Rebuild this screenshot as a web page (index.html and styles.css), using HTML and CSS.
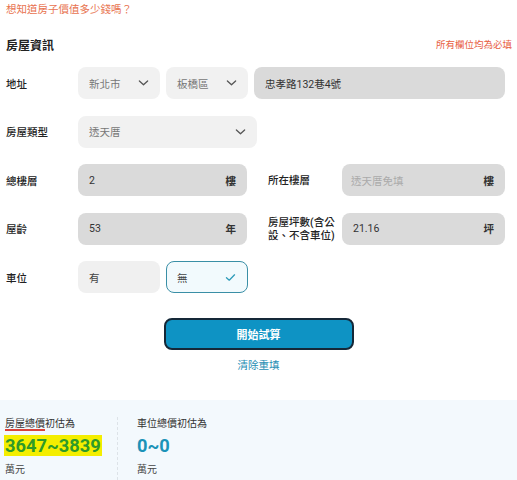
FILE: index.html
```html
<!DOCTYPE html>
<html lang="zh-Hant">
<head>
<meta charset="utf-8">
<title>房屋估價</title>
<link rel="stylesheet" href="styles.css">
</head>
<body>
<div class="page">
  <p class="intro">想知道房子價值多少錢嗎？</p>
  <div class="section-head">
    <h2 class="section-title">房屋資訊</h2>
    <span class="required-note">所有欄位均為必填</span>
  </div>

  <div class="form">
    <div class="row">
      <div class="label">地址</div>
      <div class="controls">
        <div class="select w82"><span>新北市</span><svg class="chev" viewBox="0 0 12 8"><path d="M1.5 1.8 6 6 10.5 1.8"/></svg></div>
        <div class="select w82"><span>板橋區</span><svg class="chev" viewBox="0 0 12 8"><path d="M1.5 1.8 6 6 10.5 1.8"/></svg></div>
        <div class="input grow"><span class="val">忠孝路132巷4號</span></div>
      </div>
    </div>

    <div class="row">
      <div class="label">房屋類型</div>
      <div class="controls">
        <div class="select w179"><span>透天厝</span><svg class="chev" viewBox="0 0 12 8"><path d="M1.5 1.8 6 6 10.5 1.8"/></svg></div>
      </div>
    </div>

    <div class="row">
      <div class="label">總樓層</div>
      <div class="controls">
        <div class="input w169"><span class="val">2</span><span class="unit">樓</span></div>
        <div class="label2">所在樓層</div>
        <div class="input grow"><span class="ph">透天厝免填</span><span class="unit">樓</span></div>
      </div>
    </div>

    <div class="row">
      <div class="label">屋齡</div>
      <div class="controls">
        <div class="input w169"><span class="val">53</span><span class="unit">年</span></div>
        <div class="label2">房屋坪數(含公設、不含車位)</div>
        <div class="input grow"><span class="val">21.16</span><span class="unit">坪</span></div>
      </div>
    </div>

    <div class="row">
      <div class="label">車位</div>
      <div class="controls">
        <div class="option w82"><span>有</span></div>
        <div class="option w82 selected"><span>無</span><svg class="check" viewBox="0 0 12 10"><path d="M1.5 5.2 4.6 8 10.5 2"/></svg></div>
      </div>
    </div>
  </div>

  <div class="actions">
    <button class="submit">開始試算</button>
    <a class="reset">清除重填</a>
  </div>
</div>

<div class="result">
  <div class="result-col first">
    <div class="result-label"><span class="mark">房屋總價</span>初估為</div>
    <div class="result-value green"><span class="hl">3647~3839</span></div>
    <div class="result-unit">萬元</div>
  </div>
  <div class="result-col second">
    <div class="result-label">車位總價初估為</div>
    <div class="result-value blue">0~0</div>
    <div class="result-unit">萬元</div>
  </div>
</div>
</body>
</html>
```

FILE: styles.css
```css
* { box-sizing: border-box; }
html, body { margin: 0; padding: 0; background: #fff; }
body {
  font-family: Roboto, "Noto Sans CJK TC", "Noto Sans", sans-serif;
  color: #222;
  width: 517px;
  height: 480px;
  overflow: hidden;
}
.page { padding: 2px 12px 0 6px; height: 400px; }
.intro {
  margin: 0;
  font-size: 10.5px;
  line-height: 16px;
  color: #e8734f;
}
.section-head {
  display: flex;
  justify-content: space-between;
  align-items: center;
  margin-top: 18px;
  height: 16px;
}
.section-title {
  margin: 0;
  font-size: 12px;
  font-weight: 700;
  color: #222;
}
.required-note {
  font-size: 9.5px;
  color: #e8603f;
  margin-right: -7px;
}
.form {
  margin-top: 15px;
  display: flex;
  flex-direction: column;
  gap: 16.5px;
}
.row {
  display: flex;
  align-items: center;
  min-height: 32px;
}
.label {
  width: 72px;
  font-size: 10.5px;
  font-weight: 500;
  color: #222;
}
.controls {
  flex: 1;
  display: flex;
  align-items: center;
  gap: 6px;
}
.select, .input, .option {
  height: 32px;
  border-radius: 8px;
  display: flex;
  align-items: center;
  justify-content: space-between;
  padding: 0 11px 0 11px;
  font-size: 10.5px;
}
.select { background: #f1f1f1; color: #777; }
.input { background: #dadada; color: #333; }
.option { background: #f0f0f0; color: #444; }
.option.selected {
  background: #f2fafd;
  border: 1px solid #3a8fa6;
  padding-left: 10px;
}
.w82 { width: 82px; flex: none; }
.w179 { width: 179px; flex: none; }
.w169 { width: 169px; flex: none; }
.grow { flex: 1; }
.chev { width: 11px; height: 8px; fill: none; stroke: #555; stroke-width: 1.4; stroke-linecap: round; stroke-linejoin: round; }
.check { width: 11px; height: 9px; fill: none; stroke: #2b9ab8; stroke-width: 1.4; stroke-linecap: round; stroke-linejoin: round; }
.val { color: #333; }
.ph { color: #aaa; }
.unit { font-weight: 700; color: #333; font-size: 10.5px; }
.label2 {
  width: 74px;
  margin-left: 15px;
  margin-right: -6px;
  font-size: 10.5px;
  font-weight: 500;
  line-height: 13px;
  color: #222;
}
.input .ph { margin-left: -2px; }
.actions {
  display: flex;
  flex-direction: column;
  align-items: center;
  margin-top: 25px;
  padding-left: 6px;
}
.submit {
  width: 190px;
  height: 32px;
  border: 2px solid #152838;
  border-radius: 8px;
  background: #0e93c4;
  color: #fff;
  font-family: inherit;
  font-size: 11px;
  font-weight: 700;
  padding: 0;
}
.reset {
  margin-top: 7px;
  font-size: 10.5px;
  color: #1d8db3;
}
.result {
  width: 517px;
  height: 80px;
  background: #f3f9fd;
  display: flex;
  padding-top: 17px;
}
.result-col { display: flex; flex-direction: column; }
.result-col.first { width: 118px; padding-left: 5px; border-right: 1px dashed #dde3e8; }
.result-col.second { padding-left: 19px; }
.result-label { font-size: 10px; line-height: 14px; color: #333; }
.mark { border-bottom: 2px solid #d9443a; }
.result-value {
  font-size: 18.3px;
  font-weight: 700;
  line-height: 24px;
  margin-top: 3px;
}
.result-value.green { color: #2f9a29; }
.result-value.blue { color: #1b93b8; }
.hl { background: #f4ee00; padding: 0 1px 0 1px; margin-left: -1px; }
.result-unit { font-size: 10px; color: #444; margin-top: 3px; }
```
